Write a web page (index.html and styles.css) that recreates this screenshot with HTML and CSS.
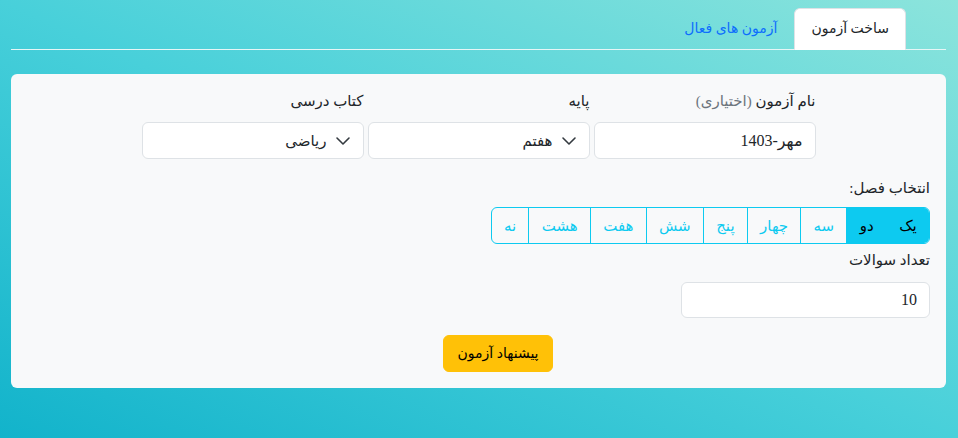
FILE: index.html
```html
<!DOCTYPE html>
<html lang="fa" dir="rtl">
<head>
<meta charset="utf-8">
<link rel="stylesheet" href="styles.css">
</head>
<body>
<div class="page">
  <ul class="tabs">
    <li class="tab active">ساخت آزمون</li>
    <li class="tab link">آزمون های فعال</li>
  </ul>
  <div class="card">
    <div class="row3">
      <div class="col">
        <div class="label">نام آزمون <span class="muted">(اختیاری)</span></div>
        <div class="input">مهر-1403</div>
      </div>
      <div class="col">
        <div class="label">پایه</div>
        <div class="select">
          <svg class="chev" width="16" height="16" viewBox="0 0 16 16"><path d="M2 5l6 6 6-6" fill="none" stroke="#343a40" stroke-width="1.6" stroke-linecap="round" stroke-linejoin="round"/></svg>
          <span>هفتم</span>
        </div>
      </div>
      <div class="col">
        <div class="label">کتاب درسی</div>
        <div class="select">
          <svg class="chev" width="16" height="16" viewBox="0 0 16 16"><path d="M2 5l6 6 6-6" fill="none" stroke="#343a40" stroke-width="1.6" stroke-linecap="round" stroke-linejoin="round"/></svg>
          <span>ریاضی</span>
        </div>
      </div>
    </div>

    <div class="label chap-label">انتخاب فصل:</div>
    <div class="group">
      <span class="gbtn on">یک</span>
      <span class="gbtn on">دو</span>
      <span class="gbtn">سه</span>
      <span class="gbtn">چهار</span>
      <span class="gbtn">پنج</span>
      <span class="gbtn">شش</span>
      <span class="gbtn">هفت</span>
      <span class="gbtn">هشت</span>
      <span class="gbtn">نه</span>
    </div>

    <div class="label count-label">تعداد سوالات</div>
    <div class="input count">10</div>

    <div class="actions">
      <button class="btn-warn">پیشنهاد آزمون</button>
    </div>
  </div>
</div>
</body>
</html>
```

FILE: styles.css
```css
* { box-sizing: border-box; }
html, body { margin: 0; height: 100%; }
body {
  font-family: "Liberation Serif", "DejaVu Sans", serif;
  font-size: 16px;
  color: #212529;
  background: linear-gradient(to top right, #12b3cb 0%, #48d0da 50%, #8ce4dc 100%);
  min-height: 438px;
}
.page {
  padding: 8px 12px 0 11px;
}
.tabs {
  list-style: none;
  margin: 0;
  padding: 0 40px 0 0;
  display: flex;
  border-bottom: 1px solid #e6f6f6;
}
.tab {
  padding: 8px 16px;
  line-height: 24px;
  font-size: 14px;
  border: 1px solid transparent;
  border-radius: 6px 6px 0 0;
  margin-bottom: -1px;
}
.tab.active {
  background: #fff;
  border-color: #dee2e6 #dee2e6 #fff;
  color: #212529;
}
.tab.link { color: #0d6efd; }

.card {
  margin-top: 24px;
  background: #f8f9fa;
  border-radius: 6px;
  padding: 16px;
}
.row3 {
  width: 678px;
  margin: 0 auto;
  display: grid;
  grid-template-columns: repeat(3, 1fr);
}
.col { padding: 0 2px; }
.label {
  line-height: 22px;
  font-size: 15px;
  margin-bottom: 10px;
}
.muted { color: #6c757d; }
.input, .select {
  height: 37px;
  background: #fff;
  border: 1px solid #dee2e6;
  border-radius: 6px;
  padding: 0 12px;
  display: flex;
  align-items: center;
  line-height: 24px;
}
.select { gap: 8px; font-size: 15px; }
.chev { flex: none; }

.chap-label { margin-top: 18px; margin-bottom: 8px; }
.group {
  display: inline-flex;
  border: 1px solid #0dcaf0;
  border-radius: 6px;
  overflow: hidden;
  height: 37px;
  font-size: 15px;
}
.gbtn {
  padding: 0 12.25px;
  display: flex;
  align-items: center;
  color: #0dcaf0;
  border-left: 1px solid #0dcaf0;
  line-height: 24px;
}
.gbtn:last-child { border-left: none; }
.gbtn.on { background: #0dcaf0; color: #000; }

.count-label { margin-top: 5px; margin-bottom: 11px; }
.input.count { width: 249px; height: 36px; }

.actions {
  margin-top: 17px;
  display: flex;
  padding-right: 377px;
}
.btn-warn {
  font: inherit;
  font-size: 14px;
  white-space: nowrap;
  background: #ffc107;
  color: #000;
  border: 1px solid #ffc107;
  border-radius: 6px;
  height: 37px;
  padding: 0 13.5px;
}
```
